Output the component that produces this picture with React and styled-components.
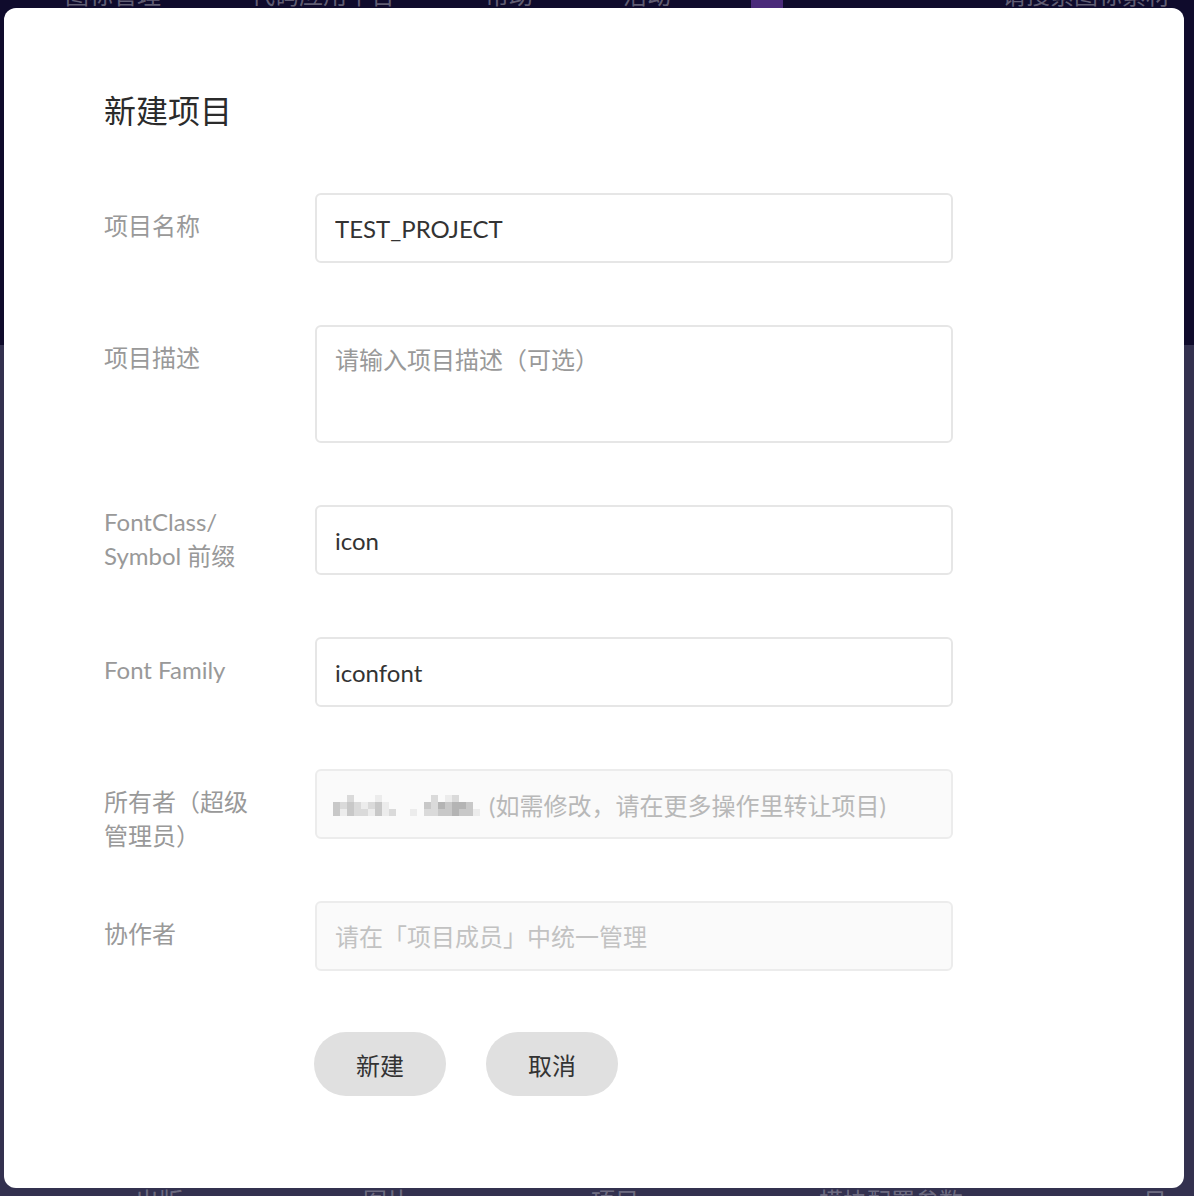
import React from 'react';
import styled, { createGlobalStyle } from 'styled-components';

const GlobalStyle = createGlobalStyle`
  html, body {
    margin: 0;
    padding: 0;
    overflow: hidden;
  }
  body {
    font-family: Lato, "Noto Sans CJK SC", sans-serif;
    background: #33314f;
  }
`;

const Page = styled.div`
  position: relative;
  width: 1194px;
  height: 1196px;
  overflow: hidden;
  display: flex;
  flex-direction: column;
`;

const Header = styled.div`
  height: 345px;
  background: #0f0b2c;
  flex-shrink: 0;
`;

const Nav = styled.div`
  display: flex;
  align-items: center;
  gap: 70px;
  padding-left: 55px;
  margin-top: -18px;
  height: 26px;
`;

const NavItem = styled.span`
  font-size: 24px;
  line-height: 26px;
  color: rgba(255, 255, 255, 0.35);
  padding: 0 10px;
  background: ${p => (p.$active ? '#4a2a7a' : 'transparent')};
  ${p => p.$right && 'margin-left: auto; margin-right: 14px;'}
`;

const Main = styled.div`
  flex: 1;
  background: #33314f;
  padding-top: 1186px;
`;

const TableHead = styled.div`
  display: flex;
  gap: 180px;
  padding-left: 135px;
  margin-top: -345px;
`;

const HeadCell = styled.span`
  font-size: 24px;
  line-height: 30px;
  color: rgba(255, 255, 255, 0.3);
`;

const Overlay = styled.div`
  position: absolute;
  inset: 0;
  padding: 8px 10px 8px 4px;
  display: flex;
`;

const Dialog = styled.div`
  width: 1180px;
  height: 1180px;
  box-sizing: border-box;
  background: #fff;
  border-radius: 12px;
  padding: 81px 0 0 100px;
`;

const Title = styled.h2`
  margin: 0 0 60px;
  font-size: 32px;
  line-height: 44px;
  font-weight: 400;
  color: #2b2b2b;
`;

const Form = styled.div`
  display: grid;
  grid-template-columns: 211px 638px;
  row-gap: 62px;
`;

const Label = styled.div`
  max-width: 160px;
  padding-top: ${p => (p.$tight ? '0' : '16px')};
  margin-bottom: ${p => (p.$tight ? '0' : '-16px')};
  font-size: 24px;
  line-height: 34px;
  color: #999;
`;

const fieldBase = `
  box-sizing: border-box;
  width: 638px;
  margin: 0;
  border: 2px solid #e6e6e6;
  border-radius: 6px;
  font-family: Lato, "Noto Sans CJK SC", sans-serif;
  font-size: 24px;
  color: #333;
  outline: none;
`;

const Input = styled.input`
  ${fieldBase}
  height: 70px;
  padding: 0 18px;
  background: ${p => (p.disabled ? '#fafafa' : '#fff')};
  border-color: ${p => (p.disabled ? '#ececec' : '#e6e6e6')};

  &::placeholder {
    color: ${p => (p.disabled ? '#c2c2c2' : '#999')};
  }
`;

const TextArea = styled.textarea`
  ${fieldBase}
  display: block;
  height: 118px;
  padding: 16px 18px;
  line-height: 34px;
  resize: none;

  &::placeholder {
    color: #999;
  }
`;

const StaticField = styled.div`
  ${fieldBase}
  height: 70px;
  padding: 0 16px;
  display: flex;
  align-items: center;
  background: #fafafa;
  border-color: #ececec;
  color: #b8b8b8;
`;

const Mosaic = styled.span`
  display: grid;
  grid-template-columns: repeat(22, 7px);
  grid-auto-rows: 7px;
  margin-right: 2px;
  margin-top: 2px;
`;

const Pixel = styled.span`
  background: ${p => p.$c};
`;

const Actions = styled.div`
  display: flex;
  gap: 40px;
  margin-top: 61px;
  padding-left: 210px;
`;

const Button = styled.button`
  width: 132px;
  height: 64px;
  border: none;
  border-radius: 32px;
  background: #e0e0e0;
  font-family: Lato, "Noto Sans CJK SC", sans-serif;
  font-size: 24px;
  color: #333;
  cursor: pointer;
`;

// blurred owner name, drawn as a mosaic
const shades = { '.': 'transparent', a: '#ececec', b: '#dadada', c: '#c8c8c8', d: '#b4b4b4' };
const mosaicRows = [
  '..b...a.......b.ab....',
  'cbcbabca.....cbdcddc..',
  'cacbbacab..a.bbccdcca.',
];

const App = () => (
  <>
    <GlobalStyle />
    <Page>
      <Header>
        <Nav>
          <NavItem>图标管理</NavItem>
          <NavItem>代码应用平台</NavItem>
          <NavItem>帮助</NavItem>
          <NavItem>活动</NavItem>
          <NavItem $active>&nbsp;&nbsp;</NavItem>
          <NavItem $right>请搜索图标素材</NavItem>
        </Nav>
      </Header>
      <Main>
        <TableHead>
          <HeadCell>出版</HeadCell>
          <HeadCell>图片</HeadCell>
          <HeadCell>项目</HeadCell>
          <HeadCell>模块配置参数</HeadCell>
          <HeadCell>日</HeadCell>
        </TableHead>
      </Main>

      <Overlay>
        <Dialog>
          <Title>新建项目</Title>
          <Form>
            <Label>项目名称</Label>
            <Input defaultValue="TEST_PROJECT" />

            <Label>项目描述</Label>
            <TextArea placeholder="请输入项目描述（可选）" />

            <Label $tight>FontClass/ Symbol 前缀</Label>
            <Input defaultValue="icon" />

            <Label>Font Family</Label>
            <Input defaultValue="iconfont" />

            <Label>所有者（超级管理员）</Label>
            <StaticField>
              <Mosaic>
                {mosaicRows.flatMap((row, r) =>
                  row.split('').map((ch, i) => <Pixel key={`${r}-${i}`} $c={shades[ch]} />)
                )}
              </Mosaic>
              (如需修改，请在更多操作里转让项目)
            </StaticField>

            <Label>协作者</Label>
            <Input disabled placeholder="请在「项目成员」中统一管理" />
          </Form>
          <Actions>
            <Button>新建</Button>
            <Button>取消</Button>
          </Actions>
        </Dialog>
      </Overlay>
    </Page>
  </>
);

export default App;
